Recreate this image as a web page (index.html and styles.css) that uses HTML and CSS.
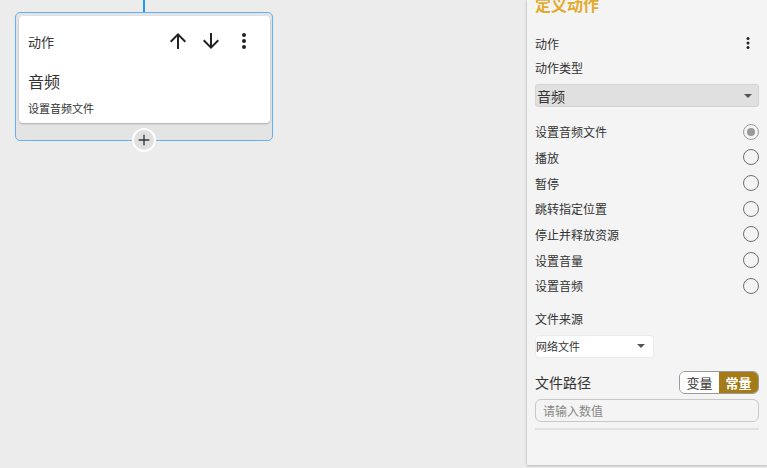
FILE: index.html
```html
<!DOCTYPE html>
<html lang="zh-CN">
<head>
    <meta charset="UTF-8">
    <title>定义动作</title>
    <link rel="stylesheet" href="styles.css">
</head>
<body>

    <main class="canvas">
        <div class="flow">
            <div class="link"></div>
            <div class="node">
                <div class="card">
                    <div class="card-head">
                        <span class="card-label">动作</span>
                        <div class="card-tools">
                            <svg class="icon" viewBox="0 0 24 24"><path d="M4 12l1.41 1.41L11 7.83V20h2V7.83l5.58 5.59L20 12l-8-8-8 8z"/></svg>
                            <svg class="icon" viewBox="0 0 24 24"><path d="M20 12l-1.41-1.41L13 16.17V4h-2v12.17l-5.58-5.59L4 12l8 8 8-8z"/></svg>
                            <svg class="icon" viewBox="0 0 24 24"><circle cx="12" cy="6" r="2"/><circle cx="12" cy="12" r="2"/><circle cx="12" cy="18" r="2"/></svg>
                        </div>
                    </div>
                    <div class="card-title">音频</div>
                    <div class="card-sub">设置音频文件</div>
                </div>
                <!-- add step button sits on the bottom border -->
                <div class="add">
                    <svg viewBox="0 0 24 24"><path d="M12 4v16M4 12h16" stroke="#333" stroke-width="2" fill="none"/></svg>
                </div>
            </div>
        </div>
    </main>

    <aside class="panel">
        <h2 class="panel-title">定义动作</h2>

        <div class="row head-row">
            <span>动作</span>
            <svg class="icon-sm" viewBox="0 0 24 24"><circle cx="12" cy="6" r="2"/><circle cx="12" cy="12" r="2"/><circle cx="12" cy="18" r="2"/></svg>
        </div>

        <div class="label">动作类型</div>
        <div class="select type-select">
            <span>音频</span>
            <i class="caret"></i>
        </div>

        <ul class="options">
            <li><span>设置音频文件</span><i class="radio checked"></i></li>
            <li><span>播放</span><i class="radio"></i></li>
            <li><span>暂停</span><i class="radio"></i></li>
            <li><span>跳转指定位置</span><i class="radio"></i></li>
            <li><span>停止并释放资源</span><i class="radio"></i></li>
            <li><span>设置音量</span><i class="radio"></i></li>
            <li><span>设置音频</span><i class="radio"></i></li>
        </ul>

        <div class="label source-label">文件来源</div>
        <div class="select source-select">
            <span>网络文件</span>
            <i class="caret"></i>
        </div>

        <div class="row path-row">
            <span class="path-label">文件路径</span>
            <div class="toggle">
                <span>变量</span>
                <span class="on">常量</span>
            </div>
        </div>
        <div class="input">请输入数值</div>
        <div class="divider"></div>
    </aside>

</body>
</html>
```

FILE: styles.css
```css
body {
    margin: 0;
    height: 468px;
    overflow: hidden;
    background-color: #ececec;
    font-family: "Noto Sans CJK SC", "Noto Sans", sans-serif;
    color: #333;
    display: flex;
}
.canvas {
    flex: 1;
    padding-left: 15px;
}
.flow {
    width: 258px;
    display: flex;
    flex-direction: column;
}
.link {
    align-self: center;
    width: 2px;
    height: 12px;
    background-color: #2196f3;
}
.node {
    position: relative;
    border: 1px solid #64b0f0;
    border-radius: 5px;
    background-color: #e4e4e4;
    padding: 3px 2px 17px 3px;
}
.card {
    background-color: #fff;
    border-radius: 4px;
    box-shadow: 0 1px 2px rgba(0, 0, 0, 0.25);
    padding: 0 0 7px 9px;
}
.card-head {
    height: 50px;
    display: flex;
    align-items: center;
    justify-content: space-between;
}
.card-label {
    font-size: 13px;
}
.card-tools {
    display: flex;
    gap: 9px;
    padding-right: 14px;
}
.icon {
    width: 24px;
    height: 24px;
    fill: #222;
}
.card-title {
    margin-top: 3px;
    font-size: 16px;
    line-height: 24px;
}
.card-sub {
    margin-top: 7px;
    font-size: 11px;
    line-height: 16px;
}
.add {
    position: absolute;
    left: 50%;
    bottom: -12px;
    transform: translateX(-50%);
    width: 20px;
    height: 20px;
    border-radius: 50%;
    border: 2px solid #fff;
    background-color: #e0e0e0;
    display: flex;
    align-items: center;
    justify-content: center;
}
.add svg {
    width: 16px;
    height: 16px;
}

.panel {
    width: 224px;
    height: 465px;
    padding: 0 8px;
    background-color: #f4f4f4;
    box-shadow: -1px 0 2px rgba(0, 0, 0, 0.08), 0 1px 2px rgba(0, 0, 0, 0.2);
    font-size: 12px;
}
.panel-title {
    margin: -6px 0 0 0;
    font-size: 16px;
    line-height: 20px;
    font-weight: bold;
    color: #e2ab2f;
}
.row {
    display: flex;
    align-items: center;
    justify-content: space-between;
}
.head-row {
    height: 24px;
    margin-top: 17px;
}
.icon-sm {
    width: 18px;
    height: 18px;
    fill: #222;
    margin-right: 2px;
}
.label {
    line-height: 18px;
    margin-top: 4px;
}
.select {
    box-sizing: border-box;
    height: 23px;
    display: flex;
    align-items: center;
    justify-content: space-between;
    border-radius: 3px;
}
.type-select {
    margin-top: 7px;
    background-color: #e0e0e0;
    border: 1px solid #d3d3d3;
    font-size: 14px;
    padding: 0 6px 0 1px;
}
.caret {
    width: 0;
    height: 0;
    border-left: 4px solid transparent;
    border-right: 4px solid transparent;
    border-top: 4px solid #555;
}
.options {
    list-style: none;
    margin: 12px 0 0 0;
    padding: 0;
}
.options li {
    height: 25.67px;
    display: flex;
    align-items: center;
    justify-content: space-between;
}
.radio {
    box-sizing: border-box;
    width: 16px;
    height: 16px;
    border-radius: 50%;
    border: 1.5px solid #707070;
    display: flex;
    align-items: center;
    justify-content: center;
}
.radio.checked {
    border-color: #9a9a9a;
}
.radio.checked::after {
    content: "";
    width: 8px;
    height: 8px;
    border-radius: 50%;
    background-color: #999;
}
.source-label {
    margin-top: 11px;
}
.source-select {
    margin-top: 7px;
    width: 119px;
    background-color: #fff;
    border: 1px solid #ebebeb;
    border-radius: 4px;
    font-size: 11px;
    padding: 0 8px 0 0;
}
.path-row {
    margin-top: 13px;
    height: 23px;
}
.path-label {
    font-size: 14px;
}
.toggle {
    box-sizing: border-box;
    display: flex;
    height: 23px;
    border: 1px solid #9a9a9a;
    border-radius: 6px;
    overflow: hidden;
}
.toggle span {
    width: 39px;
    display: flex;
    align-items: center;
    justify-content: center;
    font-size: 13px;
    background-color: #fff;
}
.toggle .on {
    background-color: #a47b16;
    color: #fff;
    font-weight: bold;
}
.input {
    box-sizing: border-box;
    margin-top: 5px;
    height: 23px;
    border: 1px solid #c8c8c8;
    border-radius: 6px;
    padding-left: 7px;
    display: flex;
    align-items: center;
    color: #888;
    font-size: 12px;
}
.divider {
    margin-top: 6px;
    height: 2px;
    background-color: #e2e2e2;
}
```
